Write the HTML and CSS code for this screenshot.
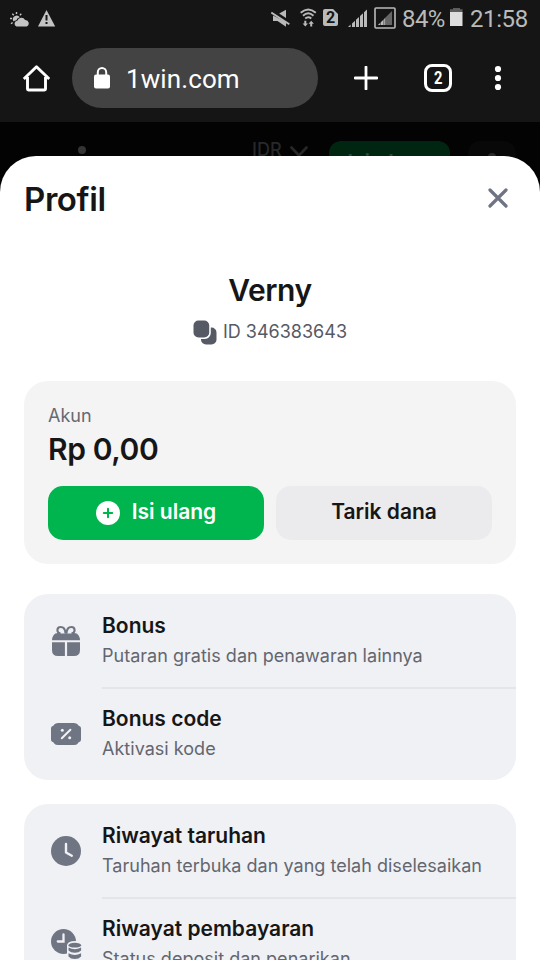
FILE: index.html
```html
<!DOCTYPE html>
<html lang="id">
<head>
<meta charset="utf-8">
<title>Profil</title>
<link rel="stylesheet" href="styles.css">
</head>
<body>
<header class="chrome">
  <div class="status">
    <svg class="weather" width="20" height="18" viewBox="0 0 20 18"><g stroke="#c4c4c4" stroke-width="1.4"><path d="M6.5 1v2M2.3 2.7l1.5 1.5M0 7.5h2M1 12.7l1.6-1.2M11.3 2.8l-1.4 1.4"/></g><path d="M3.6 10.5a3.6 3.6 0 1 1 6.2-4.2Q7 7 6.4 9.3Q4.4 9.5 3.6 10.5Z" fill="#c4c4c4"/><path d="M6.5 15.5a3 3 0 0 1 .8-5.8a4.2 4.2 0 0 1 7.8-.7a3.4 3.4 0 0 1 1.6 6.5Z" fill="#c4c4c4"/></svg>
    <svg class="warning" width="18" height="18" viewBox="0 0 18 18"><path d="M8.5 1L17.2 17.5H0Z" fill="#c4c4c4"/><path d="M8.5 6v5.4M8.5 13v2" stroke="#151515" stroke-width="2"/></svg>
    <svg class="mute" width="19" height="18" viewBox="0 0 19 18"><path d="M8.2 4.6L15 .8V9ZM2 6.5V12H6.5L15 17.8V13Z" fill="#b9b9b9"/><path d="M.3 3.5L18.3 15.3" stroke="#b9b9b9" stroke-width="1.9"/></svg>
    <svg class="wifi" width="17" height="20" viewBox="0 0 17 20"><g fill="none" stroke="#b9b9b9" stroke-width="1.9"><path d="M.7 4.8Q8.2-2 15.8 4.8M3 7.7Q8.2 3 13.5 7.7M5.2 10.4Q8.2 7.9 11.3 10.4"/></g><path d="M4.3 12.8h2v2.6h1.7l-2.7 3-2.7-3h1.7ZM10.2 18.4h2v-2.6h1.7l-2.7-3-2.7 3h1.7Z" fill="#b9b9b9"/></svg>
    <span class="sim">2</span>
    <svg class="signal" width="20" height="19" viewBox="0 0 20 19"><path d="M0 18L2.6 15.5V18ZM4 14.5L7 11.8V18H4ZM8 10.8L11 8V18H8ZM12 7.1L15 4.3V18H12ZM16 3.2L19 .5V18H16Z" fill="#bababa"/></svg>
    <svg class="signal-box" width="23" height="22" viewBox="0 0 23 22"><rect x="1" y="1" width="20" height="20" rx="1" fill="none" stroke="#bababa" stroke-width="1.6"/><path d="M4 18L18 4V18Z" fill="#666"/><path d="M4 18l2-1.8V18ZM7 15.3L9.3 13v5H7ZM10.3 12l.8-.8V18h-.8Z" fill="#bababa"/></svg>
    <span class="level">84%</span>
    <svg class="battery" width="13" height="19" viewBox="0 0 13 19"><path d="M3 0h7v1.3h2.5V5H0V1.3h3Z" fill="#5c5c5c"/><path d="M0 4h12.5v14H0Z" fill="#dedede"/></svg>
    <span class="clock">21:58</span>
  </div>
  <div class="toolbar">
    <svg class="home" width="28" height="28" viewBox="0 0 28 28"><path d="M5.5 13V25Q5.5 26 6.5 26H22.5Q23.5 26 23.5 25V13M1.8 15L14.5 2.8 27.2 15" fill="none" stroke="#fff" stroke-width="2.9" stroke-linejoin="round"/></svg>
    <div class="address">
      <svg width="16" height="22" viewBox="0 0 16 22"><rect y="7.5" width="16" height="14" rx="2" fill="#fff"/><path d="M3.8 8V5.2a4.2 4.2 0 0 1 8.4 0V8" fill="none" stroke="#fff" stroke-width="2"/></svg>
      <span>1win.com</span>
    </div>
    <svg class="add" width="24" height="24" viewBox="0 0 24 24"><path d="M12 1v22M1 12h22" stroke="#fff" stroke-width="2.8" stroke-linecap="round"/></svg>
    <span class="tabs"><b>2</b></span>
    <svg class="more" width="8" height="26" viewBox="0 0 8 26"><g fill="#fff"><circle cx="4" cy="4" r="3.1"/><circle cx="4" cy="13" r="3.1"/><circle cx="4" cy="22" r="3.1"/></g></svg>
  </div>
</header>
<div class="site">
  <i class="dot"></i>
  <span class="currency">IDR</span>
  <svg class="chevron" width="18" height="12" viewBox="0 0 18 12"><path d="M1.5 1.5L9 9.5 16.5 1.5" fill="none" stroke="#28282b" stroke-width="2.6" stroke-linecap="round"/></svg>
  <span class="site-deposit">Isi ulang</span>
  <span class="site-user"><svg width="20" height="20" viewBox="0 0 20 20"><circle cx="10" cy="5" r="4" fill="#2a2a2c"/></svg></span>
</div>
<main class="sheet">
  <div class="head">
    <h1>Profil</h1>
    <svg class="close" width="20" height="20" viewBox="0 0 20 20"><path d="M2 2L18 18M18 2L2 18" stroke="#6e7484" stroke-width="3.2" stroke-linecap="round"/></svg>
  </div>
  <h2>Verny</h2>
  <div class="user-id">
    <svg width="24" height="25" viewBox="0 0 24 25"><rect x="8" y="7.5" width="15.5" height="17" rx="5" fill="#555a65"/><rect x="-1.5" y="-1.5" width="19.3" height="20.6" rx="6" fill="#fff"/><rect x=".5" y=".5" width="15.7" height="17" rx="5" fill="#555a65"/></svg>
    <span>ID 346383643</span>
  </div>
  <section class="account">
    <div class="label">Akun</div>
    <div class="balance">Rp 0,00</div>
    <div class="actions">
      <button class="primary"><svg width="24" height="24" viewBox="0 0 24 24"><circle cx="12" cy="12" r="12" fill="#fff"/><path d="M12 7.8v8.4M7.8 12h8.4" stroke="#00b44e" stroke-width="2" stroke-linecap="round"/></svg><span>Isi ulang</span></button>
      <button class="secondary">Tarik dana</button>
    </div>
  </section>
  <section class="menu">
    <div class="row">
      <svg width="36" height="36" viewBox="0 0 36 36" fill="#707583"><path d="M10 10Q6.8 10 5.5 12.2Q4 14.5 4 17.2H32Q32 14.5 30.5 12.2Q29.2 10 26 10ZM4 19.3H16.9V33H10Q4 33 4 27ZM19.1 19.3H32V27Q32 33 26 33H19.1Z"/><path d="M17.5 10.5C17.3 6.5 15.5 4 12.7 4Q9.4 4 9.4 7.3Q9.4 10 12.5 10.5M18.5 10.5C18.7 6.5 20.5 4 23.3 4Q26.6 4 26.6 7.3Q26.6 10 23.5 10.5" fill="#f0f1f5" stroke="#707583" stroke-width="2.1"/></svg>
      <div class="text"><h3>Bonus</h3><p>Putaran gratis dan penawaran lainnya</p></div>
    </div>
    <div class="row">
      <svg width="36" height="36" viewBox="0 0 36 36"><path d="M10 7H26Q28.5 7 29.8 8.6Q30.5 10 31.8 10.3Q33 10.8 33 12.5V23.5Q33 25.2 31.8 25.7Q30.5 26 29.8 27.4Q28.5 29 26 29H10Q7.5 29 6.2 27.4Q5.5 26 4.2 25.7Q3 25.2 3 23.5V12.5Q3 10.8 4.2 10.3Q5.5 10 6.2 8.6Q7.5 7 10 7Z" fill="#707583"/><path d="M13.8 22.3L22.4 13.7" stroke="#f0f1f5" stroke-width="2" stroke-linecap="round"/><circle cx="14.3" cy="14.3" r="1.5" fill="#f0f1f5"/><circle cx="21.7" cy="21.7" r="1.5" fill="#f0f1f5"/></svg>
      <div class="text"><h3>Bonus code</h3><p>Aktivasi kode</p></div>
    </div>
  </section>
  <section class="menu">
    <div class="row">
      <svg width="36" height="36" viewBox="0 0 36 36"><circle cx="18" cy="18" r="15" fill="#707583"/><path d="M18 11v8.5l5.8 3.2" fill="none" stroke="#f0f1f5" stroke-width="2.4" stroke-linecap="round" stroke-linejoin="round"/></svg>
      <div class="text"><h3>Riwayat taruhan</h3><p>Taruhan terbuka dan yang telah diselesaikan</p></div>
    </div>
    <div class="row">
      <svg width="36" height="36" viewBox="0 0 36 36"><circle cx="15.5" cy="15.5" r="12.5" fill="#707583"/><path d="M15.5 8.5v7H9.8" fill="none" stroke="#f0f1f5" stroke-width="2.3" stroke-linecap="round"/><path d="M19 19Q20 15 27 15T35 19V35H19Z" fill="#f0f1f5"/><g fill="#707583"><ellipse cx="26.8" cy="19.2" rx="6.3" ry="2.4"/><path d="M20.5 21.6Q26.8 25 33.1 21.6V24.5Q31 26.7 26.8 26.7T20.5 24.5ZM20.5 27.3Q26.8 30.7 33.1 27.3V30.5Q31 33 26.8 33T20.5 30.5Z"/></g></svg>
      <div class="text"><h3>Riwayat pembayaran</h3><p>Status deposit dan penarikan</p></div>
    </div>
  </section>
</main>
</body>
</html>
```
FILE: styles.css
```css
* { box-sizing: border-box; }
body { margin: 0; width: 540px; height: 960px; overflow: hidden; display: flex; flex-direction: column; background: #030303; font-family: Inter, sans-serif; color: #161617; }
svg { display: block; flex: none; }
h1, h2, h3, p { margin: 0; }
.chrome { flex: none; height: 122px; background: #151515; color: #fff; font-family: Roboto, sans-serif; }
.status { height: 38px; display: flex; align-items: flex-start; padding: 9px 0 0 10px; color: #bababa; white-space: nowrap; }
.weather { margin-top: 2px; }
.warning { margin-left: 8px; }
.mute { margin-left: 215px; }
.wifi { margin: -1px 0 0 10px; }
.sim { margin: 0 0 0 6px; width: 15px; height: 17px; border-radius: 2px; background: #bababa; color: #151515; font-size: 16px; font-weight: 700; line-height: 18px; text-align: center; clip-path: polygon(0 0, 67% 0, 100% 29%, 100% 100%, 0 100%); }
.signal { margin-left: 10px; }
.signal-box { margin: -2px 0 0 6px; }
.level, .clock { font-size: 24px; line-height: 24px; margin-top: -2px; }
.level { width: 43px; margin-left: 5px; letter-spacing: -.6px; }
.battery { margin: -1px 0 0 5px; }
.clock { margin-left: 7px; letter-spacing: -.4px; }
.toolbar { height: 80px; display: flex; align-items: center; padding-left: 22px; }
.address { width: 246px; height: 60px; margin-left: 22px; padding-left: 22px; border-radius: 30px; background: #434343; display: flex; align-items: center; gap: 16px; font-size: 26px; line-height: 36px; letter-spacing: .1px; }
.address span { padding-top: 1px; }
.add { margin-left: 36px; }
.tabs { width: 28px; height: 28px; margin-left: 46px; border: 3px solid #fff; border-radius: 8px; font-size: 18px; line-height: 22px; text-align: center; }
.tabs b { display: inline-block; transform: scaleX(.82); }
.more { margin-left: 42px; }
.site { flex: none; height: 70px; display: flex; align-items: flex-start; padding: 19px 0 0 78px; background: #030303; }
.dot { width: 8px; height: 8px; margin-top: 5px; border-radius: 50%; background: #343436; }
.currency { width: 31px; margin: -2px 0 0 166px; font-size: 18px; line-height: 22px; font-weight: 500; color: #28282b; }
.chevron { margin: 5px 0 0 7px; }
.site-deposit { width: 121px; height: 48px; margin-left: 21px; border-radius: 12px; background: #002611; color: #34463b; font-size: 21px; font-weight: 600; line-height: 43px; text-align: center; }
.site-user { width: 48px; height: 48px; margin-left: 18px; padding: 11px 14px; border-radius: 12px; background: #080808; }
.sheet { flex: none; height: 804px; margin-top: -36px; padding: 0 24px; border-radius: 36px 36px 0 0; background: #fff; overflow: hidden; position: relative; }
.head { height: 84px; display: flex; justify-content: space-between; align-items: center; padding-right: 8px; }
h1 { font-size: 33px; line-height: 40px; font-weight: 570; padding-top: 1px; letter-spacing: -.4px; }
h2 { margin-top: 32px; font-size: 30px; line-height: 36px; font-weight: 570; text-align: center; letter-spacing: -.4px; }
.user-id { height: 28px; margin-top: 9px; display: flex; align-items: center; justify-content: center; gap: 6px; color: #555a65; font-size: 18px; }
.user-id svg { margin-top: 3px; }
.account { height: 183px; margin-top: 36px; padding: 23px 24px 24px; border-radius: 24px; background: #f4f4f4; }
.label { font-size: 18px; line-height: 24px; color: #666972; }
.balance { font-size: 30px; line-height: 36px; font-weight: 570; margin-top: 3px; letter-spacing: -.4px; }
.actions { display: grid; grid-template-columns: 1fr 1fr; gap: 12px; margin-top: 19px; }
button { height: 54px; padding: 0 0 3px; border: 0; border-radius: 15px; font: 600 21px/26px Inter, sans-serif; display: flex; align-items: center; justify-content: center; gap: 12px; }
.primary { background: #00b44e; color: #fff; }
.primary svg { position: relative; top: 1px; }
.secondary { background: #ebebed; color: #161617; }
.menu { margin-top: 30px; height: 186px; border-radius: 24px; background: #f0f1f5; }
.menu + .menu { margin-top: 24px; }
.row { height: 93px; display: flex; padding-left: 24px; }
.row svg { margin-top: 29px; }
.text { flex: 1; margin-left: 18px; padding-top: 18px; height: 95px; white-space: nowrap; }
.row:first-child .text { border-bottom: 2px solid #e4e5e9; }
h3 { font-size: 21px; line-height: 27px; font-weight: 600; }
p { margin-top: 5px; font-size: 18px; line-height: 24px; color: #63666f; letter-spacing: .02px; }
```
